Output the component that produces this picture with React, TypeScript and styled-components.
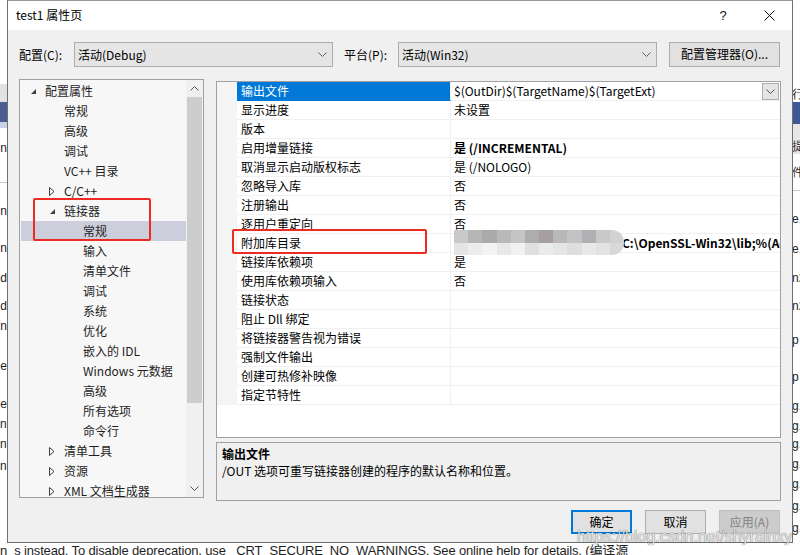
import React from 'react';
import styled, { createGlobalStyle, css } from 'styled-components';

const FONT = `"Noto Sans CJK SC", "Noto Sans", sans-serif`;

const GlobalStyle = createGlobalStyle`
  html, body { margin: 0; padding: 0; background: #fff; }
  body { font-family: ${FONT}; font-size: 12px; color: #000; }
  #root { width: 800px; height: 555px; }
  * { box-sizing: border-box; }
`;

const Page = styled.div`
  position: relative;
  width: 800px;
  height: 555px;
  overflow: hidden;
  background: #fff;
`;

/* ---------- backdrop (editor behind the dialog) ---------- */
const Backdrop = styled.div`
  display: grid;
  grid-template-columns: 7px 1fr 8px;
  grid-template-rows: 542px 13px;
  width: 100%;
  height: 100%;
`;
const Strip = styled.div<{ $align: 'left' | 'right' }>`
  display: flex;
  flex-direction: column;
  overflow: hidden;
  text-align: ${(p) => p.$align};
  direction: ${(p) => (p.$align === 'right' ? 'rtl' : 'ltr')};
`;
const StripLine = styled.div<{ $h: number; $bg?: string }>`
  flex: none;
  height: ${(p) => p.$h}px;
  background: ${(p) => p.$bg || 'transparent'};
  font-family: "Liberation Sans", sans-serif;
  font-size: 12px;
  line-height: ${(p) => p.$h}px;
  white-space: nowrap;
  color: #1e1e1e;
  unicode-bidi: plaintext;
`;
const BottomText = styled.div`
  grid-column: 1 / 4;
  font-family: "Liberation Sans", "Noto Sans CJK SC", sans-serif;
  font-size: 13px;
  line-height: 16px;
  margin-top: 1px;
  letter-spacing: -0.15px;
  white-space: nowrap;
  overflow: hidden;
  color: #1e1e1e;
`;

/* ---------- dialog ---------- */
const Dialog = styled.div`
  position: absolute;
  left: 7px;
  top: 0;
  width: 786px;
  height: 543px;
  border: 1px solid #6f6f6f;
  border-top-color: #9a9a9a;
  background: #f0f0f0;
  display: flex;
  flex-direction: column;
`;
const TitleBar = styled.div`
  height: 29px;
  flex: none;
  background: #fff;
  display: flex;
  align-items: center;
  padding-left: 8px;
`;
const Title = styled.div`
  flex: 1;
  font-size: 12px;
  line-height: 16px;
  margin-top: -1px;
`;
const CaptionButton = styled.div`
  width: 46px;
  height: 29px;
  display: flex;
  align-items: center;
  justify-content: center;
  font-family: "Liberation Sans", sans-serif;
  font-size: 13px;
  color: #111;
`;
const Body = styled.div`
  flex: 1;
  min-height: 0;
  display: flex;
  flex-direction: column;
  padding: 12px 11px 0 11px;
`;
const ConfigRow = styled.div`
  display: grid;
  grid-template-columns: 55px 259px 65px 259px minmax(0, 1fr);
  align-items: center;
  height: 25px;
`;
const FieldLabel = styled.div<{ $pad?: number }>`
  padding-left: ${(p) => p.$pad || 0}px;
  line-height: 16px;
`;
const Combo = styled.div`
  height: 25px;
  display: flex;
  align-items: center;
  border: 1px solid #adadad;
  background: #e5e5e5;
  padding: 0 5px 0 3px;
  line-height: 16px;
`;
const ComboText = styled.span`
  flex: 1;
`;
const PushButton = styled.div<{ $variant?: 'default' | 'normal' | 'disabled'; $w?: number }>`
  height: ${(p) => (p.$w ? 24 : 25)}px;
  width: ${(p) => (p.$w ? `${p.$w}px` : 'auto')};
  display: flex;
  align-items: center;
  justify-content: center;
  line-height: 16px;
  background: #e1e1e1;
  border: 1px solid #adadad;
  ${(p) =>
    p.$variant === 'default' &&
    css`
      border: 2px solid #0078d7;
    `}
  ${(p) =>
    p.$variant === 'disabled' &&
    css`
      background: #cccccc;
      border-color: #bfbfbf;
      color: #838383;
    `}
`;
const ManagerButton = styled(PushButton)`
  justify-self: end;
  width: 111px;
  margin-right: 1px;
  margin-top: -1px;
`;

const Main = styled.div`
  display: flex;
  gap: 12px;
  margin-top: 12px;
  height: 422px;
`;

/* tree */
const Tree = styled.div`
  width: 185px;
  height: 419px;
  flex: none;
  border: 1px solid #a0a0a0;
  background: #f7f7f7;
  display: flex;
  overflow: hidden;
`;
const TreeList = styled.div`
  flex: 1;
  min-width: 0;
  padding-top: 1px;
  overflow: hidden;
`;
const TreeRow = styled.div<{ $level: number; $selected?: boolean }>`
  height: 20px;
  display: flex;
  align-items: center;
  margin-left: 1px;
  padding-left: ${(p) => 9 + p.$level * 19}px;
  background: ${(p) => (p.$selected ? '#cccedb' : 'transparent')};
  color: #1e1e1e;
  white-space: nowrap;
  line-height: 16px;
`;
const ArrowSlot = styled.span`
  width: 15px;
  flex: none;
  display: flex;
  align-items: center;
`;
const ScrollBar = styled.div`
  width: 17px;
  flex: none;
  background: #f0f0f0;
  display: flex;
  flex-direction: column;
`;
const ScrollArrow = styled.div`
  height: 17px;
  flex: none;
  display: flex;
  align-items: center;
  justify-content: center;
`;
const ScrollTrack = styled.div`
  flex: 1;
`;
const ScrollThumb = styled.div`
  height: 306px;
  margin: 0 1px;
  background: #cdcdcd;
`;

/* right column */
const RightCol = styled.div`
  flex: 1;
  min-width: 0;
  display: flex;
  flex-direction: column;
`;
const Grid = styled.div`
  margin-top: 2px;
  height: 357px;
  border: 1px solid #a0a0a0;
  background: #fff;
  overflow: hidden;
`;
const GridRow = styled.div`
  display: grid;
  grid-template-columns: 20px 214px minmax(0, 1fr);
  height: 19px;
`;
const Gutter = styled.div`
  background: #f5f5f5;
`;
const NameCell = styled.div<{ $selected?: boolean }>`
  border-right: 1px solid #f0f0f0;
  border-bottom: 1px solid #f0f0f0;
  padding-left: 4px;
  display: flex;
  align-items: center;
  line-height: 16px;
  white-space: nowrap;
  overflow: hidden;
  ${(p) =>
    p.$selected &&
    css`
      background: #0078d7;
      color: #fff;
      border-bottom-color: #0078d7;
    `}
`;
const ValueCell = styled.div<{ $bold?: boolean }>`
  position: relative;
  min-width: 0;
  border-bottom: 1px solid #f0f0f0;
  padding-left: 3px;
  display: flex;
  align-items: center;
  line-height: 16px;
  white-space: nowrap;
  font-weight: ${(p) => (p.$bold ? 700 : 400)};
`;
const ValueText = styled.span<{ $indent?: number }>`
  flex: 1;
  min-width: 0;
  overflow: hidden;
  padding-left: ${(p) => p.$indent || 0}px;
`;
const DropButton = styled.div`
  width: 17px;
  height: 17px;
  flex: none;
  margin-right: 1px;
  border: 1px solid #adadad;
  background: #e5e5e5;
  display: flex;
  align-items: center;
  justify-content: center;
`;
const Mosaic = styled.div`
  position: absolute;
  left: 3px;
  top: -4px;
  width: 170px;
  height: 25px;
  border-radius: 0 12px 12px 0;
  overflow: hidden;
  display: grid;
  grid-template-columns: repeat(12, 1fr);
  grid-template-rows: 1fr 1fr;
  filter: blur(0.6px);
  z-index: 2;
`;
const MosaicCell = styled.div<{ $c: string }>`
  background: ${(p) => p.$c};
`;

const Description = styled.div`
  margin-top: 4px;
  height: 59px;
  border: 1px solid #a0a0a0;
  background: #f0f0f0;
  padding: 2px 5px;
  line-height: 17px;
`;
const DescTitle = styled.div`
  font-weight: 700;
`;

const ButtonRow = styled.div`
  display: flex;
  justify-content: flex-end;
  gap: 13px;
  margin-top: 9px;
  padding-right: 1px;
`;

/* overlays */
const RedBox = styled.div`
  position: absolute;
  border: 2px solid #ee2b22;
  border-radius: 2px;
  pointer-events: none;
`;
const Watermark = styled.div`
  position: absolute;
  left: 577px;
  top: 528px;
  font-family: "Liberation Sans", sans-serif;
  font-size: 16px;
  color: rgba(255, 255, 255, 0.85);
  text-shadow: 0 0 1px rgba(0, 0, 0, 0.5), 0 0 1px rgba(0, 0, 0, 0.35);
  white-space: nowrap;
`;

/* icons */
const Chevron = ({ up = false, color = '#606060' }: { up?: boolean; color?: string }) => (
  <svg width="9" height="5" viewBox="0 0 9 5">
    <polyline
      points={up ? '0.5,4.5 4.5,0.5 8.5,4.5' : '0.5,0.5 4.5,4.5 8.5,0.5'}
      fill="none"
      stroke={color}
      strokeWidth="1"
    />
  </svg>
);
const OpenArrow = () => (
  <svg width="7" height="9" viewBox="0 0 7 9">
    <path d="M6 2 L6 7 L1 7 Z" fill="#404040" />
  </svg>
);
const ClosedArrow = () => (
  <svg width="7" height="9" viewBox="0 0 7 9">
    <path d="M0.5 0.5 L5 4.5 L0.5 8.5 Z" fill="none" stroke="#404040" strokeWidth="1" />
  </svg>
);
const CloseIcon = () => (
  <svg width="11" height="11" viewBox="0 0 11 11">
    <path d="M0.5 0.5 L10.5 10.5 M10.5 0.5 L0.5 10.5" stroke="#111" strokeWidth="1" />
  </svg>
);

type TreeItem = { level: number; label: string; arrow?: 'open' | 'closed'; selected?: boolean };
const treeItems: TreeItem[] = [
  { level: 0, label: '配置属性', arrow: 'open' },
  { level: 1, label: '常规' },
  { level: 1, label: '高级' },
  { level: 1, label: '调试' },
  { level: 1, label: 'VC++ 目录' },
  { level: 1, label: 'C/C++', arrow: 'closed' },
  { level: 1, label: '链接器', arrow: 'open' },
  { level: 2, label: '常规', selected: true },
  { level: 2, label: '输入' },
  { level: 2, label: '清单文件' },
  { level: 2, label: '调试' },
  { level: 2, label: '系统' },
  { level: 2, label: '优化' },
  { level: 2, label: '嵌入的 IDL' },
  { level: 2, label: 'Windows 元数据' },
  { level: 2, label: '高级' },
  { level: 2, label: '所有选项' },
  { level: 2, label: '命令行' },
  { level: 1, label: '清单工具', arrow: 'closed' },
  { level: 1, label: '资源', arrow: 'closed' },
  { level: 1, label: 'XML 文档生成器', arrow: 'closed' },
];

type PropItem = { name: string; value: string; selected?: boolean; bold?: boolean; blurred?: boolean };
const props: PropItem[] = [
  { name: '输出文件', value: '$(OutDir)$(TargetName)$(TargetExt)', selected: true },
  { name: '显示进度', value: '未设置' },
  { name: '版本', value: '' },
  { name: '启用增量链接', value: '是 (/INCREMENTAL)', bold: true },
  { name: '取消显示启动版权标志', value: '是 (/NOLOGO)' },
  { name: '忽略导入库', value: '否' },
  { name: '注册输出', value: '否' },
  { name: '逐用户重定向', value: '否' },
  { name: '附加库目录', value: 'C:\\OpenSSL-Win32\\lib;%(AdditionalLibraryDirectories)', bold: true, blurred: true },
  { name: '链接库依赖项', value: '是' },
  { name: '使用库依赖项输入', value: '否' },
  { name: '链接状态', value: '' },
  { name: '阻止 Dll 绑定', value: '' },
  { name: '将链接器警告视为错误', value: '' },
  { name: '强制文件输出', value: '' },
  { name: '创建可热修补映像', value: '' },
  { name: '指定节特性', value: '' },
];

const mosaicColors = [
  '#c9c9c9', '#b5b5b5', '#aaaaaa', '#b9b9b9', '#c4c4c4', '#adadad', '#a69ea2', '#b8b8b8', '#c3c3c3', '#b1aeb4', '#c9c9c9', '#d2d2d2',
  '#e4e4e4', '#ececec', '#f3f3f3', '#e8e8e8', '#f1f1f1', '#e0e0e0', '#ebebeb', '#e5e5e5', '#dedede', '#e9e9e9', '#e2e2e2', '#d8d8d8',
];

type StripItem = { h: number; bg?: string; t?: string };
const leftStrip: StripItem[] = [
  { h: 84 },
  { h: 18, bg: '#e2e2e2' },
  { h: 20, bg: '#4b5d91' },
  { h: 6, bg: '#c9d1e6' },
  { h: 12 },
  { h: 16, t: 'n' },
  { h: 26 },
  { h: 1, bg: '#c8c8c8' },
  { h: 19 },
  { h: 18, t: 'n' },
  { h: 20 },
  { h: 16, t: 'n' },
  { h: 14 },
  { h: 16, t: 'd' },
  { h: 12 },
  { h: 16, t: 'd' },
  { h: 4 },
  { h: 16, t: 'n' },
  { h: 24 },
  { h: 16, t: 'e' },
  { h: 22 },
  { h: 16, t: 'e' },
  { h: 4 },
  { h: 16, t: 'nt' },
  { h: 4 },
  { h: 16, t: 'nt' },
  { h: 6 },
  { h: 16, t: 'nt' },
];
const rightStrip: StripItem[] = [
  { h: 86 },
  { h: 16, t: '行' },
  { h: 22, bg: '#3d5a96' },
  { h: 14, bg: '#e6e6e6' },
  { h: 16, bg: '#e6e6e6', t: '提' },
  { h: 10 },
  { h: 16, t: '件' },
  { h: 10 },
  { h: 1, bg: '#c8c8c8' },
  { h: 20 },
  { h: 16, t: 'e.l' },
  { h: 14 },
  { h: 16, t: 'e.l' },
  { h: 13 },
  { h: 16, t: 'n2' },
  { h: 12 },
  { h: 16, t: 'n2' },
  { h: 17 },
  { h: 18, t: 'p' },
  { h: 19 },
  { h: 18, t: 'p' },
  { h: 12 },
  { h: 16, t: 'g.·' },
  { h: 4 },
  { h: 16, t: 'g.·' },
  { h: 2 },
  { h: 16, t: 'g.·' },
  { h: 4 },
  { h: 16, t: 'g.·' },
  { h: 4 },
  { h: 16, t: 'g.·' },
  { h: 6 },
  { h: 16, t: 'g.·' },
  { h: 6 },
  { h: 16, t: 'g.·' },
];

export default function App() {
  return (
    <Page>
      <GlobalStyle />
      <Backdrop>
        <Strip $align="right">
          {leftStrip.map((s, i) => (
            <StripLine key={i} $h={s.h} $bg={s.bg}>
              {s.t}
            </StripLine>
          ))}
        </Strip>
        <div />
        <Strip $align="left">
          {rightStrip.map((s, i) => (
            <StripLine key={i} $h={s.h} $bg={s.bg}>
              {s.t}
            </StripLine>
          ))}
        </Strip>
        <BottomText>
          n_s instead. To disable deprecation, use _CRT_SECURE_NO_WARNINGS. See online help for details. (编译源
        </BottomText>
      </Backdrop>

      <Dialog>
        <TitleBar>
          <Title>test1 属性页</Title>
          <CaptionButton>?</CaptionButton>
          <CaptionButton>
            <CloseIcon />
          </CaptionButton>
        </TitleBar>
        <Body>
          <ConfigRow>
            <FieldLabel>配置(C):</FieldLabel>
            <Combo>
              <ComboText>活动(Debug)</ComboText>
              <Chevron />
            </Combo>
            <FieldLabel $pad={11}>平台(P):</FieldLabel>
            <Combo>
              <ComboText>活动(Win32)</ComboText>
              <Chevron />
            </Combo>
            <ManagerButton>配置管理器(O)...</ManagerButton>
          </ConfigRow>

          <Main>
            <Tree>
              <TreeList>
                {treeItems.map((t, i) => (
                  <TreeRow key={i} $level={t.level} $selected={t.selected}>
                    <ArrowSlot>
                      {t.arrow === 'open' && <OpenArrow />}
                      {t.arrow === 'closed' && <ClosedArrow />}
                    </ArrowSlot>
                    {t.label}
                  </TreeRow>
                ))}
              </TreeList>
              <ScrollBar>
                <ScrollArrow>
                  <Chevron up color="#505050" />
                </ScrollArrow>
                <ScrollTrack>
                  <ScrollThumb />
                </ScrollTrack>
                <ScrollArrow>
                  <Chevron color="#505050" />
                </ScrollArrow>
              </ScrollBar>
            </Tree>

            <RightCol>
              <Grid>
                {props.map((p, i) => (
                  <GridRow key={i}>
                    <Gutter />
                    <NameCell $selected={p.selected}>{p.name}</NameCell>
                    <ValueCell $bold={p.bold}>
                      {p.blurred && (
                        <Mosaic>
                          {mosaicColors.map((c, j) => (
                            <MosaicCell key={j} $c={c} />
                          ))}
                        </Mosaic>
                      )}
                      <ValueText $indent={p.blurred ? 168 : 0}>{p.value}</ValueText>
                      {p.selected && (
                        <DropButton>
                          <Chevron color="#505050" />
                        </DropButton>
                      )}
                    </ValueCell>
                  </GridRow>
                ))}
              </Grid>
              <Description>
                <DescTitle>输出文件</DescTitle>
                <div>/OUT 选项可重写链接器创建的程序的默认名称和位置。</div>
              </Description>
            </RightCol>
          </Main>

          <ButtonRow>
            <PushButton $variant="default" $w={61}>确定</PushButton>
            <PushButton $w={61}>取消</PushButton>
            <PushButton $variant="disabled" $w={61}>应用(A)</PushButton>
          </ButtonRow>
        </Body>
      </Dialog>

      <RedBox style={{ left: 33, top: 198, width: 118, height: 43 }} />
      <RedBox style={{ left: 232, top: 229, width: 195, height: 25 }} />
      <Watermark>https://blog.csdn.net/shyrainxy</Watermark>
    </Page>
  );
}
